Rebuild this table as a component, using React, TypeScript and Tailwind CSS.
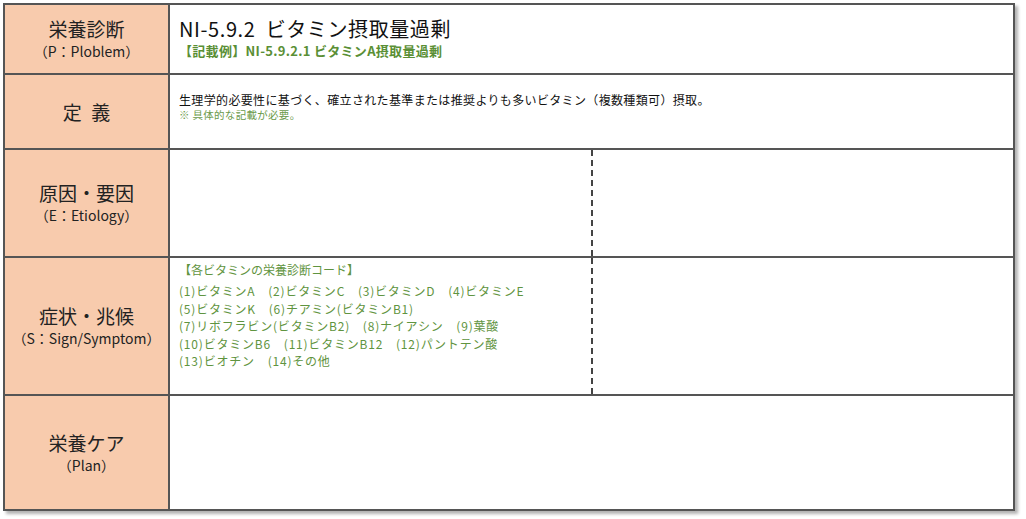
const font = "font-['Noto_Sans_CJK_JP','Noto_Sans',sans-serif]";

function Label({ main, sub, spaced }: { main: string; sub?: string; spaced?: boolean }) {
  return (
    <div className="flex w-[165px] shrink-0 flex-col items-center justify-center border-r-2 border-[#555] bg-[#f8cbad] text-[#222]">
      <div className={`text-[19px] leading-[24px] ${spaced ? "tracking-[0.5em] pl-[0.5em]" : ""}`}>{main}</div>
      {sub && <div className="text-[14px] leading-[20px]">{sub}</div>}
    </div>
  );
}

const vitamins = [
  "(1)ビタミンA\u3000(2)ビタミンC\u3000(3)ビタミンD\u3000(4)ビタミンE",
  "(5)ビタミンK\u3000(6)チアミン(ビタミンB1)",
  "(7)リボフラビン(ビタミンB2)\u3000(8)ナイアシン\u3000(9)葉酸",
  "(10)ビタミンB6\u3000(11)ビタミンB12\u3000(12)パントテン酸",
  "(13)ビオチン\u3000(14)その他",
];

export default function App() {
  return (
    <div className={`h-[519px] w-[1026px] bg-white pl-[3px] pt-[3px] ${font}`}>
      <div className="flex h-[508px] w-[1012px] flex-col border-2 border-[#555] bg-white shadow-[3px_3px_3px_rgba(0,0,0,0.3)]">
        <div className="flex h-[70px] border-b-2 border-[#555]">
          <Label main="栄養診断" sub="（P：Ploblem）" />
          <div className="flex flex-col justify-center pl-[9px] pb-[4px]">
            <div className="text-[20px] leading-[26px] tracking-[0.6px] text-[#111]">NI-5.9.2&nbsp; ビタミン摂取量過剰</div>
            <div className="text-[13px] font-bold leading-[17px] tracking-[0.3px] text-[#5a8f35]">【記載例】NI-5.9.2.1 ビタミンA摂取量過剰</div>
          </div>
        </div>
        <div className="flex h-[75px] border-b-2 border-[#555]">
          <Label main="定義" spaced />
          <div className="flex flex-col justify-center pl-[9px] pb-[10px]">
            <div className="text-[12px] leading-[16px] tracking-[0.35px] text-[#111]">生理学的必要性に基づく、確立された基準または推奨よりも多いビタミン（複数種類可）摂取。</div>
            <div className="text-[10.5px] leading-[14px] tracking-[0.3px] text-[#6a9a4a]">※ 具体的な記載が必要。</div>
          </div>
        </div>
        <div className="flex h-[108px] border-b-2 border-[#555]">
          <Label main="原因・要因" sub="（E：Etiology）" />
          <div className="w-[423px] border-r-2 border-dashed border-[#444]" />
          <div className="flex-1" />
        </div>
        <div className="flex h-[138px] border-b-2 border-[#555]">
          <Label main="症状・兆候" sub="（S：Sign/Symptom）" />
          <div className="w-[423px] border-r-2 border-dashed border-[#444] pl-[9px] pt-[3px] text-[#5f9440]">
            <div className="text-[12px] leading-[17px]">【各ビタミンの栄養診断コード】</div>
            <div className="mt-[4px] text-[12px] leading-[17.5px] tracking-[0.8px]">
              {vitamins.map((v) => (
                <div key={v}>{v}</div>
              ))}
            </div>
          </div>
          <div className="flex-1" />
        </div>
        <div className="flex flex-1">
          <Label main="栄養ケア" sub="（Plan）" />
          <div className="flex-1" />
        </div>
      </div>
    </div>
  );
}
